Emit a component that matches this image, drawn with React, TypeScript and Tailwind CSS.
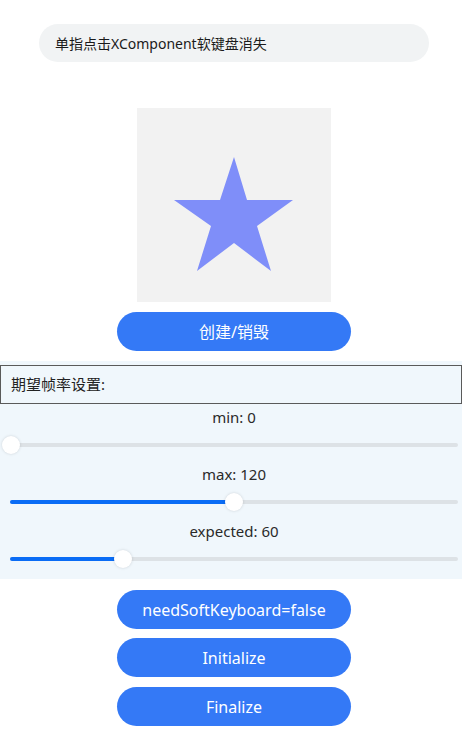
import React from "react";

const font = { fontFamily: '"Noto Sans", "Noto Sans CJK SC", sans-serif' };

function Slider({ pct }: { pct: number }) {
  return (
    <div className="relative h-[37px] w-full">
      <div className="absolute left-[10px] right-[4px] top-[16px] h-[4px] rounded-full bg-[#dde2e6]">
        <div className="h-full rounded-full bg-[#0a6cf5]" style={{ width: `${pct * 100}%` }} />
      </div>
      <div
        className="absolute top-[9px] h-[18px] w-[18px] rounded-full bg-white shadow-[0_0_3px_rgba(0,0,0,0.15)]"
        style={{ left: `${11 + pct * 446 - 9}px` }}
      />
    </div>
  );
}

function Btn({ children, className = "" }: { children: React.ReactNode; className?: string }) {
  return (
    <div
      className={`ml-[117px] flex h-[39px] w-[234px] items-center justify-center rounded-full bg-[#3479f6] text-[16px] text-white ${className}`}
    >
      {children}
    </div>
  );
}

function Label({ children, className = "" }: { children: React.ReactNode; className?: string }) {
  return (
    <div className={`flex h-[20px] items-center justify-center pl-[6px] text-[15px] text-[#2a2a2a] ${className}`}>
      {children}
    </div>
  );
}

export default function App() {
  return (
    <div className="min-h-[737px] w-[462px] bg-white pt-[24px]" style={font}>
      <div className="ml-[39px] flex h-[38px] w-[390px] items-center rounded-full bg-[#f1f3f4] pl-[16px] text-[14px] text-[#1a1a1a]">
        单指点击XComponent软键盘消失
      </div>
      <div className="ml-[137px] mt-[46px] h-[194px] w-[194px] bg-[#f2f2f2]">
        <svg viewBox="0 0 194 194" width="194" height="194">
          <polygon
            points="97,49 110,92 156,92 120,118 134,163 97,135 60,163 74,118 37,92 83,92"
            fill="#7f8ef9"
          />
        </svg>
      </div>
      <Btn className="mt-[10px]">创建/销毁</Btn>
      <div className="mt-[10px] bg-[#f0f7fc] pb-[1px] pt-[4px]">
        <div className="flex h-[39px] items-center border border-[#5a5a5a] pl-[10px] text-[15px] text-[#222]">
          期望帧率设置:
        </div>
        <Label className="mt-[3px]">min: 0</Label>
        <Slider pct={0} />
        <Label>max: 120</Label>
        <Slider pct={0.5} />
        <Label>expected: 60</Label>
        <Slider pct={0.25} />
      </div>
      <Btn className="mt-[11px]">needSoftKeyboard=false</Btn>
      <Btn className="mt-[9px]">Initialize</Btn>
      <Btn className="mt-[10px]">Finalize</Btn>
    </div>
  );
}
